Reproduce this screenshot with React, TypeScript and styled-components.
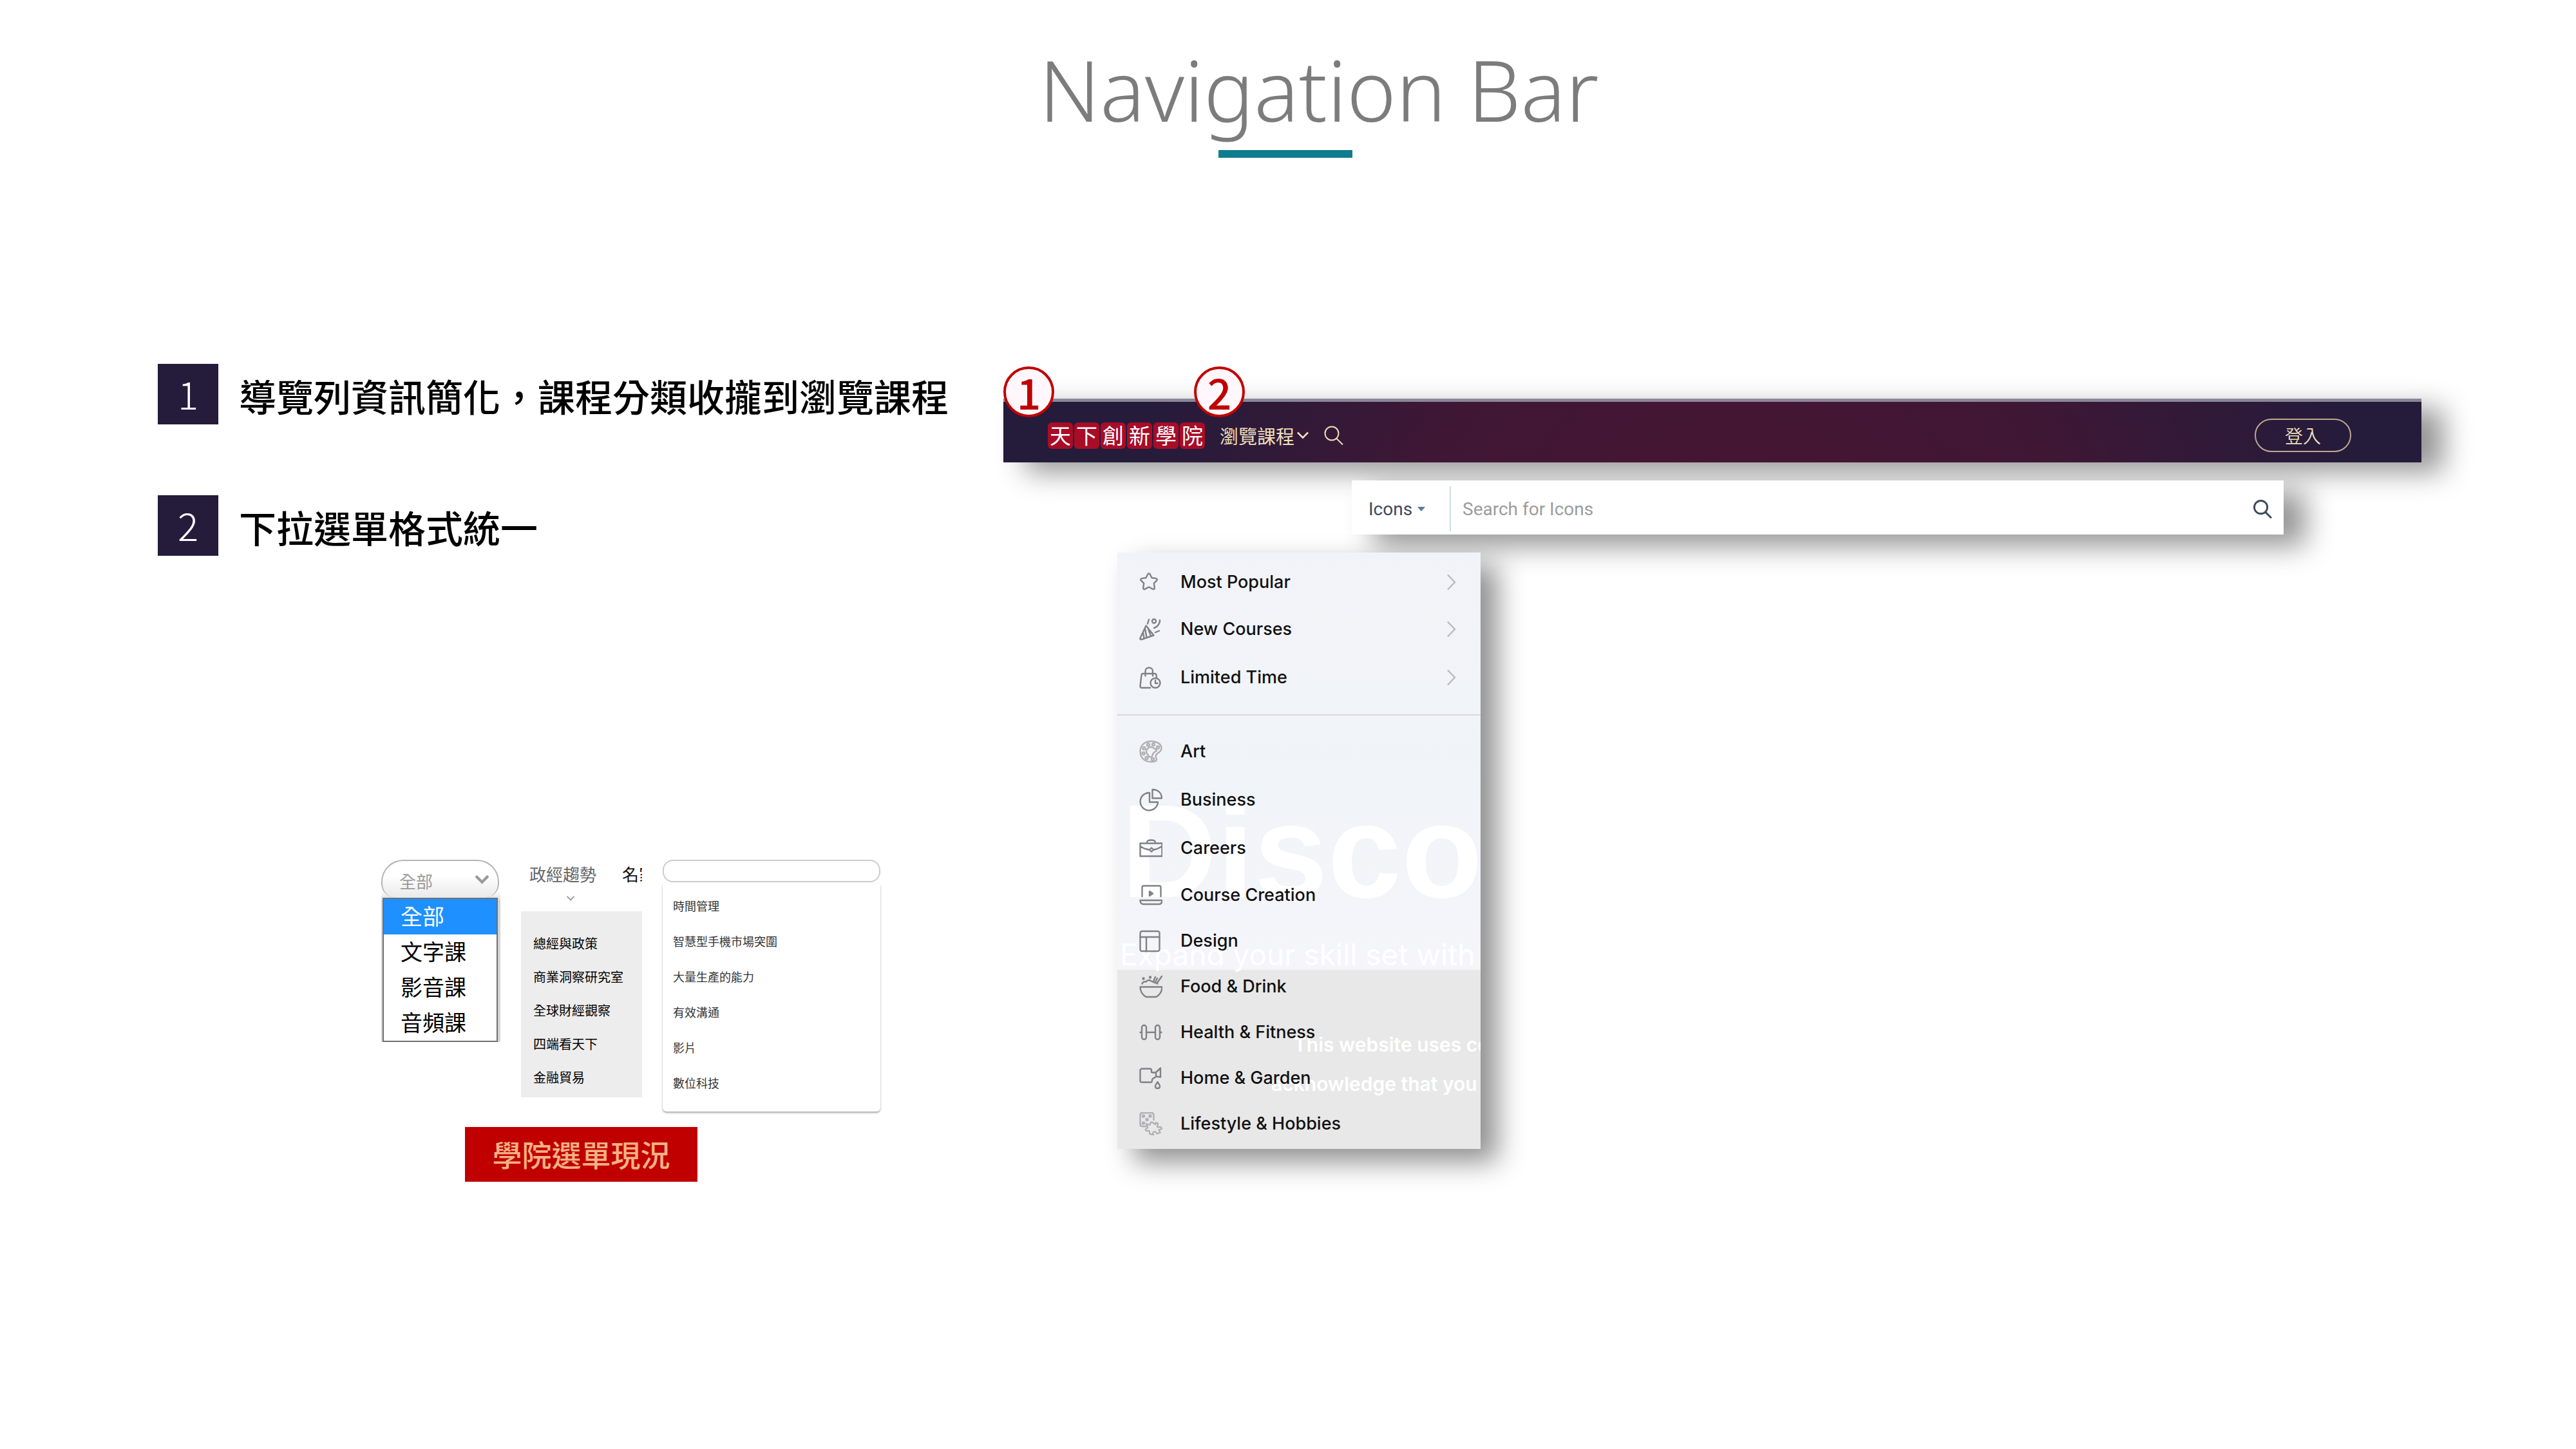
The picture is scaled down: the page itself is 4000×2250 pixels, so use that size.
import React from "react";
import styled, { createGlobalStyle } from "styled-components";

const latin = `Inter, "Liberation Sans", sans-serif`;
const cjk = `"Noto Sans CJK TC", "Noto Sans", sans-serif`;

const GlobalStyle = createGlobalStyle`
  *, *::before, *::after { box-sizing: border-box; }
  body { margin: 0; background: #fff; font-family: ${cjk}; color: #000; overflow-x: hidden; }
  h1, p, ul, ol, figure { margin: 0; padding: 0; }
  ul, ol { list-style: none; }
  button, input, select { font: inherit; color: inherit; margin: 0; padding: 0; border: 0; background: none; }
  button { cursor: pointer; }
  a { color: inherit; text-decoration: none; }
  svg { display: block; flex: none; }
`;

const Page = styled.div`
  padding-bottom: 400px;
`;

const Header = styled.header`
  display: flex;
  flex-direction: column;
  align-items: center;
  gap: 14px;
  padding: 59px 8px 0 0;
`;

const Title = styled.h1`
  padding-left: 104px;
  font: 350 130px/160px "Noto Sans", sans-serif;
  color: #7c7c7c;
`;

const Underline = styled.span`
  width: 208px;
  height: 12px;
  background: #0f7c90;
`;

const Main = styled.main`
  display: grid;
  grid-template-columns: 1313px 1fr;
  align-items: start;
  padding: 320px 240px 0 245px;
`;

const Points = styled.ol`
  display: flex;
  flex-direction: column;
  gap: 110px;
`;

const Point = styled.li`
  display: flex;
  align-items: center;
  gap: 32px;
  height: 94px;
`;

const PointNumber = styled.span`
  display: grid;
  place-items: center;
  width: 94px;
  height: 94px;
  padding-bottom: 4px;
  background: #251b3b;
  color: #fff;
  font: 300 60px/80px ${cjk};
`;

const PointText = styled.p`
  padding-top: 4px;
  font: 500 58px/80px ${cjk};
`;

const Current = styled.figure`
  display: flex;
  flex-direction: column;
  gap: 24px;
  margin: 472px 0 0 347px;
`;

const CurrentMenus = styled.div`
  display: flex;
  align-items: flex-start;
  gap: 32px;
`;

const Caption = styled.figcaption`
  align-self: flex-start;
  width: 361px;
  padding-bottom: 2px;
  margin-left: 130px;
  background: #c00000;
  color: #f4b183;
  text-align: center;
  font: 500 46px/83px ${cjk};
`;

const TypePicker = styled.div`
  width: 185px;
  padding-right: 2px;
  background: linear-gradient(#fff 50px, #d4d4d4 64px);
`;

const SelectWrap = styled.label`
  display: flex;
  align-items: center;
  height: 59px;
  padding: 0 14px 0 26px;
  border: 2px solid #b4b4b4;
  border-bottom: 0;
  border-radius: 34px 34px 22px 22px;
  background: linear-gradient(#fff 40%, #e9e9e9);
  color: #9a9a9a;
`;

const TypeSelect = styled.select`
  flex: 1;
  min-width: 0;
  appearance: none;
  font-size: 26px;
  line-height: 50px;
  padding-top: 4px;
  outline: 0;
`;

const TypeList = styled.ul`
  margin: 0 2px;
  border: 2px solid #707070;
  background: #fff;
`;

const TypeOption = styled.button<{ $active?: boolean }>`
  display: block;
  width: 100%;
  height: 55px;
  padding: 0 0 3px 26px;
  text-align: left;
  font-size: 34px;
  line-height: 50px;
  background: ${(p) => (p.$active ? "#1e90ff" : "#fff")};
  color: ${(p) => (p.$active ? "#fff" : "#000")};
`;

const TopicMenu = styled.nav`
  width: 188px;
`;

const TopicTabs = styled.div`
  display: flex;
  gap: 40px;
  height: 54px;
  padding-left: 13px;
  overflow: hidden;
  white-space: nowrap;
  font-size: 26px;
  line-height: 44px;
`;

const TopicTab = styled.a<{ $current?: boolean }>`
  flex: none;
  color: ${(p) => (p.$current ? "#666" : "#111")};
`;

const TabMarker = styled.div`
  display: flex;
  height: 26px;
  padding-left: 71px;
`;

const TopicList = styled.ul`
  padding: 24px 0 5px 19px;
  background: #ededed;
  font-size: 20px;
  line-height: 52px;
`;

const TagBox = styled.div`
  width: 338px;
`;

const TagInput = styled.input`
  display: block;
  width: 100%;
  height: 35px;
  padding: 0 16px;
  border: 2px solid #ccc;
  border-radius: 16px;
  font-size: 18px;
  outline: 0;
`;

const TagList = styled.ul`
  padding: 9px 16px 17px;
  border-radius: 6px;
  box-shadow: 0 2px 3px rgba(0, 0, 0, 0.35);
  color: #333;
  font-size: 18px;
  line-height: 55px;
`;

const Proposal = styled.section`
  display: flex;
  flex-direction: column;
  gap: 28px;
  padding-top: 54px;
`;

const NavBar = styled.nav`
  position: relative;
  display: flex;
  align-items: center;
  height: 99px;
  padding: 10px 109px 0 69px;
  border-top: 5px solid #8a8799;
  background: radial-gradient(ellipse 43% 500% at 52% 120%, #461532, #3f1735 50%, #251b3b) padding-box;
  box-shadow: 34px 15px 44px rgba(0, 0, 0, 0.42);
  color: #ecdfba;
`;

const Marker = styled.span<{ $left: number }>`
  position: absolute;
  top: -55px;
  left: ${(p) => p.$left}px;
  display: grid;
  place-items: center;
  width: 79px;
  height: 79px;
  padding-bottom: 4px;
  border: 4px solid #c00000;
  border-radius: 50%;
  background: #fff7fc;
  color: #c00000;
  font: 500 66px/66px ${cjk};
`;

const Logo = styled.a`
  display: flex;
  gap: 2px;
  margin-right: 23px;
`;

const LogoTile = styled.span`
  width: 39px;
  height: 41px;
  border-radius: 6px;
  background: #a80c27;
  color: #fff;
  text-align: center;
  font-size: 33px;
  line-height: 38px;
`;

const Browse = styled.button`
  display: flex;
  align-items: center;
  gap: 4px;
  margin-right: 24px;
  font-size: 29px;
  font-weight: 400;
  line-height: 40px;
`;

const IconButton = styled.button`
  display: grid;
  place-items: center;
`;

const Login = styled.button`
  width: 150px;
  height: 52px;
  margin-left: auto;
  border: 2px solid #bfa88f;
  border-radius: 26px;
  font-size: 28px;
  font-weight: 350;
  line-height: 44px;
`;

const SearchBar = styled.form`
  position: relative;
  display: flex;
  align-items: center;
  height: 84px;
  margin: 0 214px 0 541px;
  padding: 4px 18px 0 26px;
  background: #fff;
  box-shadow: 34px 18px 44px rgba(0, 0, 0, 0.42);
  color: #3d4a5c;
  font-family: Roboto, sans-serif;
  font-size: 28px;
`;

const Scope = styled.button`
  display: flex;
  align-items: center;
  gap: 8px;
  width: 128px;
  height: 70px;
  border-right: 2px solid #d0dde6;
`;

const SearchInput = styled.input`
  flex: 1;
  min-width: 0;
  padding-left: 18px;
  outline: 0;
  &::placeholder { color: #9c9c9c; opacity: 1; }
`;

const Menu = styled.nav`
  position: relative;
  width: 564px;
  margin-left: 177px;
  padding: 10px 0 4px;
  overflow: hidden;
  background: linear-gradient(#f2f3f8 0, #f0f4f8 34%, #f5f5fa 70%, #e8e8e8 70%);
  box-shadow: 26px 20px 40px rgba(0, 0, 0, 0.44);
  font-family: ${latin};
`;

const Ghost = styled.span<{ $x: number; $y: number; $size: number; $weight: number }>`
  position: absolute;
  left: ${(p) => p.$x}px;
  top: ${(p) => p.$y}px;
  color: #fff;
  white-space: nowrap;
  font-size: ${(p) => p.$size}px;
  font-weight: ${(p) => p.$weight};
  line-height: 1;
`;

const GhostHeadline = styled(Ghost)`
  font-family: "Liberation Sans", Arial, sans-serif;
`;

const MenuGroup = styled.ul`
  position: relative;
  & + & {
    margin-top: 20px;
    padding-top: 18px;
    border-top: 2px solid #d9d9df;
  }
`;

const MenuLink = styled.a<{ $tall?: boolean }>`
  display: grid;
  grid-template-columns: 36px 1fr 14px;
  column-gap: 28px;
  align-items: center;
  height: ${(p) => (p.$tall ? 75 : 71)}px;
  padding: 0 38px 0 34px;
  color: #111;
  font-size: 27px;
  font-weight: 500;
  line-height: 36px;
`;

const Glyph = styled.svg<{ $faint?: boolean }>`
  width: 36px;
  height: 36px;
  fill: none;
  stroke: ${(p) => (p.$faint ? "#b0b0b4" : "#808186")};
  stroke-width: 2.4;
  stroke-linecap: round;
  stroke-linejoin: round;
`;

const icons = {
  star: (
    <path d="M15 4.500c1 0 1.500.6 1.900 1.500l2.600 5.200 6.300.9c2 .3 2.600 1.900 1.300 3.300l-4.300 4.400 1 6.600c.3 2.200-1.100 3.100-2.900 2.200L15 25.500l-5.900 3.100c-1.800.9-3.200 0-2.900-2.200l1-6.600-4.300-4.400c-1.300-1.400-.7-3 1.300-3.300l6.300-.9 2.600-5.200c.4-.9.900-1.500 1.900-1.500z" />
  ),
  party: (
    <>
      <path d="M10.500 12.500L1.500 32c-.5 1.500.5 2.500 2 2l19-6.500zM9 17l2.500 14M13.500 16l4.500 12.500M6 23l1.500 9" />
      <circle cx="23" cy="5.500" r="3" />
      <path d="M15 3l-2 6.500M32 4c.5 5-4 11-9 12M25 23l6-2.500" />
    </>
  ),
  bag: (
    <>
      <path d="M17 34H3.500C2 34 1.300 33 1.500 31.500l2-17.500C3.700 12.600 4.500 12 6 12h18c1.400 0 2.300.7 2.500 2l.7 5M9.500 15.500V8c0-7 11.500-7 11.500 0v7.500" />
      <circle cx="25" cy="26.500" r="7.500" />
      <path d="M25 22.500v4.500h3.500" />
    </>
  ),
  palette: (
    <>
      <path d="M18 2C8 2 1.500 9 1.500 18S8 34 18 34c5 0 9-.5 9-3.500 0-2-1.500-2.500-1.500-5 0-3.500 3-4.500 5.500-6.500 2-1.700 3.500-3.500 3.500-6C34.500 6 27 2 18 2z" />
      <path d="M18 11c3 0 4 2 7 3s3 3 0 4-4 4-5 7-4 2-6-1-3-3-3-6 3-7 7-7z" />
      <circle cx="14" cy="7.500" r="2" /><circle cx="22" cy="7" r="2" /><circle cx="29" cy="11.500" r="2" />
      <circle cx="7.500" cy="13" r="2" /><circle cx="6.500" cy="21" r="2" /><circle cx="11.500" cy="28" r="2" /><circle cx="21" cy="30" r="2" />
    </>
  ),
  pie: <path d="M16 7A13.700 13.700 0 1 0 29 21.500H16zM20.500 2v13.500H35C35 7 29 2 20.500 2z" />,
  briefcase: (
    <>
      <path d="M1.500 10.500h34v20h-34zM12 10c0-4 2-4.500 6.500-4.500S25 6 25 10M1.500 15c5 3.500 10 5 14.500 5.500M35.500 15c-5 3.500-9.500 5-13.500 5.500" />
      <path d="M19 17.500l3 3-3 3-3-3z" />
    </>
  ),
  laptop: (
    <>
      <path d="M4.500 20V6c0-1.500 1-2.500 2.500-2.500h24c1.500 0 2.500 1 2.500 2.500v14M1.500 26h34c0 4-2 6-5 6h-24c-3 0-5-2-5-6z" />
      <path d="M16 12l5 3.500-5 3.500z" fill="#808186" />
    </>
  ),
  layout: (
    <>
      <rect x="1.500" y="3" width="30" height="31" rx="3" />
      <path d="M1.500 12h30M11 12v22" />
    </>
  ),
  bowl: (
    <>
      <path d="M1.500 18.500h34c0 7-3.500 12-9 15.500h-16c-5.500-3.500-9-8.500-9-15.500zM4.500 13.500c1-3 4-3.500 6-3 2-2.500 5-3 7.500-1.500s4 2 6.500 3l4 1.500M22 10l3-7M28 12l7-10M25 11l3-6" />
      <circle cx="6.500" cy="5.500" r="1" /><circle cx="17" cy="3.500" r="1" />
    </>
  ),
  dumbbell: (
    <>
      <rect x="4" y="7" width="7" height="22" rx="3.500" />
      <rect x="25" y="7" width="7" height="22" rx="3.500" />
      <path d="M1.500 18H4M11 18h14M32 18h2.500" />
    </>
  ),
  garden: (
    <>
      <path d="M19 9V6c0-1.500-1-2.500-2.500-2.500h-12C3 3.500 1.500 4.500 1.500 6v16c0 1.500 1 2.500 2.500 2.500h15c2-2 0-4 2-5.500 1.500-1 4-1.500 5-3.500l7 1V2.500L26.500 8.500C24 10 21 9.500 19 9zM33 3L26 9v7" />
      <path d="M28.500 24c2 3 3.500 5 3.500 7 0 4-7 4-7 0 0-2 1.500-4 3.500-7z" />
    </>
  ),
  hobbies: (
    <>
      <path d="M11 22H5c-2 0-3.500-1.500-3.500-3.500V4.500C1.500 2.500 3 1 5 1h14c2 0 3.500 1.500 3.500 3.500V12" />
      <circle cx="6.500" cy="6" r="1.500" /><circle cx="17" cy="6" r="1.500" /><circle cx="12" cy="11.500" r="1.500" /><circle cx="6.500" cy="17" r="1.500" />
      <path d="M11 18l5 2c2 0 0-4 3-4.500s3 3 6 3.500l1-3 3 1.500-1 5c1 2 5-1 6.500 1.500s-2 3-4 3.500l2 4-5 2c-1-3-3-4-5-3s-1 3-.5 4.500L17 34c-2-1 0-4-2-5s-4 1-5-1 2-3 3-4z" />
    </>
  ),
};

type IconName = keyof typeof icons;
type Item = { label: string; icon: IconName; tall?: boolean; faint?: boolean };

const featured: Item[] = [
  { label: "Most Popular", icon: "star" },
  { label: "New Courses", icon: "party", tall: true },
  { label: "Limited Time", icon: "bag", tall: true },
];

const categories: Item[] = [
  { label: "Art", icon: "palette", tall: true, faint: true },
  { label: "Business", icon: "pie", tall: true },
  { label: "Careers", icon: "briefcase", tall: true },
  { label: "Course Creation", icon: "laptop" },
  { label: "Design", icon: "layout" },
  { label: "Food & Drink", icon: "bowl" },
  { label: "Health & Fitness", icon: "dumbbell" },
  { label: "Home & Garden", icon: "garden" },
  { label: "Lifestyle & Hobbies", icon: "hobbies", faint: true },
];

const points = ["導覽列資訊簡化，課程分類收攏到瀏覽課程", "下拉選單格式統一"];
const types = ["全部", "文字課", "影音課", "音頻課"];
const topics = ["總經與政策", "商業洞察研究室", "全球財經觀察", "四端看天下", "金融貿易"];
const tags = ["時間管理", "智慧型手機市場突圍", "大量生產的能力", "有效溝通", "影片", "數位科技"];

const Chevron = ({ size, color, weight }: { size: number; color: string; weight: number }) => (
  <svg width={size} height={size} viewBox="0 0 20 20" fill="none" stroke={color} strokeWidth={weight}>
    <path d="M1 5l9 9 9-9" />
  </svg>
);

const Magnifier = ({ size, weight }: { size: number; weight: number }) => (
  <svg width={size} height={size} viewBox="0 0 30 30" fill="none" stroke="currentColor" strokeWidth={weight}>
    <circle cx="12" cy="12" r="10.500" />
    <path d="M19 19.500l10 10" />
  </svg>
);

const MenuItem = ({ item, arrow }: { item: Item; arrow?: boolean }) => (
  <li>
    <MenuLink href="#" $tall={item.tall}>
      <Glyph viewBox="0 0 36 36" $faint={item.faint} aria-hidden="true">{icons[item.icon]}</Glyph>
      {item.label}
      {arrow && (
        <svg width="14" height="26" viewBox="0 0 14 26" fill="none" stroke="#b9bac0" strokeWidth="2.4">
          <path d="M1 1.500l11 11.500L1 24.500" />
        </svg>
      )}
    </MenuLink>
  </li>
);

export default function App() {
  return (
    <Page>
      <GlobalStyle />
      <Header>
        <Title>Navigation Bar</Title>
        <Underline />
      </Header>
      <Main>
        <section>
          <Points>
            {points.map((text, i) => (
              <Point key={text}>
                <PointNumber>{i + 1}</PointNumber>
                <PointText>{text}</PointText>
              </Point>
            ))}
          </Points>
          <Current>
            <CurrentMenus>
              <TypePicker>
                <SelectWrap>
                  <TypeSelect aria-label="課程類型">
                    <option>全部</option>
                  </TypeSelect>
                  <Chevron size={21} color="#9a9a9a" weight={4} />
                </SelectWrap>
                <TypeList>
                  {types.map((t, i) => (
                    <li key={t}><TypeOption type="button" $active={i === 0}>{t}</TypeOption></li>
                  ))}
                </TypeList>
              </TypePicker>
              <TopicMenu>
                <TopicTabs>
                  <TopicTab href="#" $current>政經趨勢</TopicTab>
                  <TopicTab href="#">名家</TopicTab>
                </TopicTabs>
                <TabMarker><Chevron size={12} color="#999" weight={3} /></TabMarker>
                <TopicList>
                  {topics.map((t) => <li key={t}><a href="#">{t}</a></li>)}
                </TopicList>
              </TopicMenu>
              <TagBox>
                <TagInput type="text" aria-label="搜尋" />
                <TagList>
                  {tags.map((t) => <li key={t}><a href="#">{t}</a></li>)}
                </TagList>
              </TagBox>
            </CurrentMenus>
            <Caption>學院選單現況</Caption>
          </Current>
        </section>

        <Proposal>
          <NavBar>
            <Logo href="#">
              {[..."天下創新學院"].map((c) => <LogoTile key={c}>{c}</LogoTile>)}
            </Logo>
            <Browse type="button">
              瀏覽課程
              <Chevron size={18} color="#ecdfba" weight={3} />
            </Browse>
            <IconButton type="button" aria-label="搜尋"><Magnifier size={30} weight={2} /></IconButton>
            <Login type="button">登入</Login>
            <Marker $left={0}>1</Marker>
            <Marker $left={296}>2</Marker>
          </NavBar>

          <SearchBar>
            <Scope type="button">
              Icons
              <svg width="12" height="7" viewBox="0 0 12 7" fill="#5b7a99"><path d="M0 0h12L6 7z" /></svg>
            </Scope>
            <SearchInput type="search" aria-label="Search" placeholder="Search for Icons" />
            <IconButton type="submit" aria-label="Search"><Magnifier size={29} weight={3} /></IconButton>
          </SearchBar>

          <Menu>
            <GhostHeadline $x={6} $y={361} $size={206} $weight={700} aria-hidden="true">Disco</GhostHeadline>
            <Ghost $x={4} $y={601} $size={46} $weight={400} aria-hidden="true">Expand your skill set with</Ghost>
            <Ghost $x={274} $y={749} $size={30} $weight={600} aria-hidden="true">This website uses cookies</Ghost>
            <Ghost $x={239} $y={810} $size={30} $weight={600} aria-hidden="true">acknowledge that you</Ghost>
            <MenuGroup>{featured.map((m) => <MenuItem key={m.label} item={m} arrow />)}</MenuGroup>
            <MenuGroup>{categories.map((m) => <MenuItem key={m.label} item={m} />)}</MenuGroup>
          </Menu>
        </Proposal>
      </Main>
    </Page>
  );
}
